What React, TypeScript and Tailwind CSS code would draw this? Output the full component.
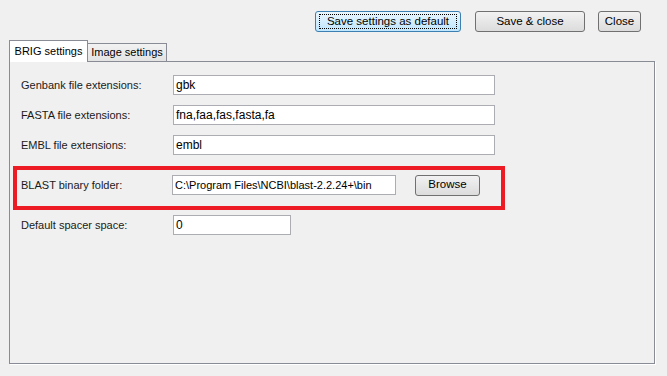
import React from 'react';

const font = "font-['Tahoma','Liberation_Sans','DejaVu_Sans',sans-serif]";

function WinButton({ label, width, isDefault }: { label: string; width: string; isDefault?: boolean }) {
  return (
    <div
      className={`${width} h-[21px] rounded-[3px] border flex items-center justify-center text-[11.5px] text-black whitespace-nowrap ${
        isDefault
          ? 'border-[#3c7fb1] bg-gradient-to-b from-[#eaf6fd] to-[#bee6fd]'
          : 'border-[#707070] bg-gradient-to-b from-[#f2f2f2] to-[#dcdcdc]'
      }`}
    >
      {isDefault ? (
        <div className="w-[calc(100%-6px)] h-[15px] border border-dotted border-black flex items-center justify-center">
          {label}
        </div>
      ) : (
        label
      )}
    </div>
  );
}

function Field({ label, value, width = 'w-[322px]' }: { label: string; value: string; width?: string }) {
  return (
    <div className="flex items-center h-[20px]">
      <span className="w-[152px] text-[11px] text-[#1a1a1a] whitespace-nowrap">{label}</span>
      <div className={`${width} h-[20px] bg-white border border-[#abadb3] flex items-center pl-[2px] text-[12px] text-black`}>
        {value}
      </div>
    </div>
  );
}

export default function App() {
  return (
    <div className={`w-[667px] h-[376px] bg-[#f0f0f0] overflow-hidden ${font}`}>
      <div className="flex justify-end pt-[11px] pr-[26px]">
        <WinButton label="Save settings as default" width="w-[146px]" isDefault />
        <div className="ml-[14px]">
          <WinButton label="Save & close" width="w-[110px]" />
        </div>
        <div className="ml-[13px]">
          <WinButton label="Close" width="w-[43px]" />
        </div>
      </div>

      <div className="flex items-end ml-[9px] mt-[8px] h-[21px]">
        <div className="relative z-10 h-[22px] w-[79px] bg-white border border-b-0 border-[#898c95] flex items-center justify-center text-[11px] text-black -mb-[1px] whitespace-nowrap">
          BRIG settings
        </div>
        <div className="h-[18px] w-[79px] bg-gradient-to-b from-[#f2f2f2] to-[#e3e3e3] border border-b-0 border-l-0 border-[#898c95] flex items-center justify-center text-[11px] text-black whitespace-nowrap">
          Image settings
        </div>
      </div>

      <div className="ml-[9px] w-[646px] h-[303px] border border-[#898c95] shadow-[1px_1px_0_#ffffff] bg-[#f0f0f0] pt-[13px] pl-[11px] flex flex-col">
        <Field label="Genbank file extensions:" value="gbk" />
        <div className="h-[10px]" />
        <Field label="FASTA file extensions:" value="fna,faa,fas,fasta,fa" />
        <div className="h-[10px]" />
        <Field label="EMBL file extensions:" value="embl" />

        <div className="-ml-[8px] mt-[11px] w-[492px] h-[44px] border-[4px] border-[#ed1c24] pl-[4px] pt-[5px]">
          <div className="flex items-center h-[20px]">
            <span className="w-[151px] text-[11px] text-[#1a1a1a] whitespace-nowrap">BLAST binary folder:</span>
            <div className="w-[224px] h-[20px] bg-white border border-[#abadb3] flex items-center pl-[2px] text-[11px] text-black whitespace-nowrap overflow-hidden">
              C:\Program Files\NCBI\blast-2.2.24+\bin
            </div>
            <div className="ml-[19px]">
              <WinButton label="Browse" width="w-[65px]" />
            </div>
          </div>
        </div>

        <div className="mt-[5px]">
          <Field label="Default spacer space:" value="0" width="w-[118px]" />
        </div>
      </div>
    </div>
  );
}
